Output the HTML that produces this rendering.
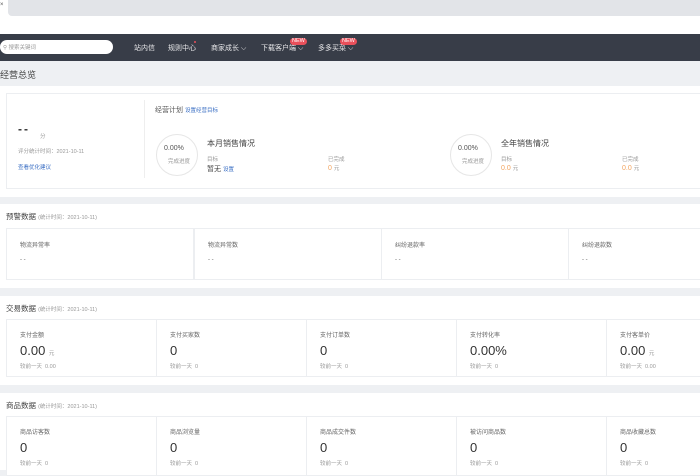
<!DOCTYPE html><html><head><meta charset="utf-8"><style>
*{margin:0;padding:0;box-sizing:border-box}
body{width:700px;height:470px;overflow:hidden;background:#eef0f3;font-family:"Liberation Sans","Noto Sans CJK SC",sans-serif;color:#333;position:relative}
.a{position:absolute;white-space:nowrap}
.w{background:#fff}
.box{position:absolute;border:1px solid #eceef1;background:#fff}
.lbl{font-size:6px;color:#666}
.sm{font-size:5.5px;color:#999}
.big{font-size:13px;color:#333}
.blue{color:#3b6fc4}
.org{color:#f2a35e}
.nav{font-size:7px;color:#e8e8ea}
.new{position:absolute;background:#e8505b;color:#fff;font-size:5.5px;border-radius:4px;padding:0 2px;line-height:7px}
</style></head><body>
<div class="a" style="left:0;top:0;width:700px;height:16px;background:#fff"></div>
<div class="a" style="left:8px;top:0;width:692px;height:16px;background:#e2e4e8;border-radius:0 0 0 4px"></div>
<div class="a" style="left:0;top:2px;font-size:6px;color:#555">×</div>
<div class="a" style="left:0;top:16px;width:700px;height:18px;background:#fff"></div>
<div class="a" style="left:0;top:34px;width:700px;height:27px;background:#383d48"></div>
<div class="a" style="left:0;top:40px;width:113px;height:14px;background:#fff;border-radius:7px"></div>
<div class="a sm" style="left:3px;top:43px">&#9906; 搜索关键词</div>
<div class="a nav" style="left:134px;top:43px">站内信</div>
<div class="a nav" style="left:168px;top:43px">规则中心</div>
<div class="a" style="left:194px;top:41px;width:2px;height:2px;background:#e8505b;border-radius:1px"></div>
<div class="a nav" style="left:211px;top:43px">商家成长 ⌵</div>
<div class="a nav" style="left:261px;top:43px">下载客户端 ⌵</div>
<div class="new" style="left:290px;top:38px">NEW</div>
<div class="a nav" style="left:318px;top:43px">多多买菜 ⌵</div>
<div class="new" style="left:340px;top:38px">NEW</div>
<div class="a" style="left:0;top:68px;font-size:9px;color:#444">经营总览</div>
<div class="a w" style="left:0;top:86px;width:700px;height:111px"></div>
<div class="box" style="left:6px;top:93px;width:700px;height:96px"></div>
<div class="a" style="left:144px;top:100px;width:1px;height:78px;background:#eee"></div>
<div class="a" style="left:18px;top:122px;font-size:12px;font-weight:bold;color:#333;letter-spacing:2px">--</div>
<div class="a sm" style="left:40px;top:132px">分</div>
<div class="a sm" style="left:18px;top:147px">评分统计时间：2021-10-11</div>
<div class="a sm blue" style="left:18px;top:163px">查看优化建议</div>
<div class="a" style="left:155px;top:105px;font-size:7px;color:#555">经营计划 <span class="blue" style="font-size:5.5px">设置经营目标</span></div>
<div class="a" style="left:156px;top:134px;width:42px;height:42px;border:1.5px solid #e6e6e6;border-radius:50%"></div>
<div class="a" style="left:164px;top:145px;font-size:7px;color:#555">0.00%</div>
<div class="a sm" style="left:168px;top:157px">完成进度</div>
<div class="a" style="left:207px;top:138px;font-size:8px;color:#444">本月销售情况</div>
<div class="a sm" style="left:207px;top:155px">目标</div>
<div class="a" style="left:207px;top:164px;font-size:7px;color:#444">暂无 <span class="blue" style="font-size:5.5px">设置</span></div>
<div class="a sm" style="left:328px;top:155px">已完成</div>
<div class="a" style="left:328px;top:164px;font-size:7px"><span class="org">0</span> <span class="sm">元</span></div>
<div class="a" style="left:450px;top:134px;width:42px;height:42px;border:1.5px solid #e6e6e6;border-radius:50%"></div>
<div class="a" style="left:458px;top:145px;font-size:7px;color:#555">0.00%</div>
<div class="a sm" style="left:462px;top:157px">完成进度</div>
<div class="a" style="left:501px;top:138px;font-size:8px;color:#444">全年销售情况</div>
<div class="a sm" style="left:501px;top:155px">目标</div>
<div class="a" style="left:501px;top:164px;font-size:7px"><span class="org">0.0</span> <span class="sm">元</span></div>
<div class="a sm" style="left:622px;top:155px">已完成</div>
<div class="a" style="left:622px;top:164px;font-size:7px"><span class="org">0.0</span> <span class="sm">元</span></div>

<div class="a w" style="left:0;top:204px;width:700px;height:84px"></div>
<div class="a" style="left:6px;top:211px;font-size:7.5px;color:#444">预警数据 <span class="sm">(统计时间：2021-10-11)</span></div>
<div class="box" style="left:6px;top:228px;width:188px;height:52px"></div>
<div class="box" style="left:194px;top:228px;width:188px;height:52px"></div>
<div class="box" style="left:381px;top:228px;width:188px;height:52px"></div>
<div class="box" style="left:568px;top:228px;width:188px;height:52px"></div>
<div class="a lbl" style="left:20px;top:240px">物流异常率</div><div class="a lbl" style="left:20px;top:257px">- -</div>
<div class="a lbl" style="left:208px;top:240px">物流异常数</div><div class="a lbl" style="left:208px;top:257px">- -</div>
<div class="a lbl" style="left:395px;top:240px">纠纷退款率</div><div class="a lbl" style="left:395px;top:257px">- -</div>
<div class="a lbl" style="left:582px;top:240px">纠纷退款数</div><div class="a lbl" style="left:582px;top:257px">- -</div>

<div class="a w" style="left:0;top:296px;width:700px;height:89px"></div>
<div class="a" style="left:6px;top:303px;font-size:7.5px;color:#444">交易数据 <span class="sm">(统计时间：2021-10-11)</span></div>
<div class="box" style="left:6px;top:319px;width:151px;height:58px"></div>
<div class="box" style="left:156px;top:319px;width:151px;height:58px"></div>
<div class="box" style="left:306px;top:319px;width:151px;height:58px"></div>
<div class="box" style="left:456px;top:319px;width:151px;height:58px"></div>
<div class="box" style="left:606px;top:319px;width:151px;height:58px"></div>
<div class="a lbl" style="left:20px;top:330px">支付金额</div><div class="a big" style="left:20px;top:343px">0.00 <span class="sm">元</span></div><div class="a sm" style="left:20px;top:362px">较前一天&nbsp;&nbsp;0.00</div>
<div class="a lbl" style="left:170px;top:330px">支付买家数</div><div class="a big" style="left:170px;top:343px">0</div><div class="a sm" style="left:170px;top:362px">较前一天&nbsp;&nbsp;0</div>
<div class="a lbl" style="left:320px;top:330px">支付订单数</div><div class="a big" style="left:320px;top:343px">0</div><div class="a sm" style="left:320px;top:362px">较前一天&nbsp;&nbsp;0</div>
<div class="a lbl" style="left:470px;top:330px">支付转化率</div><div class="a big" style="left:470px;top:343px">0.00%</div><div class="a sm" style="left:470px;top:362px">较前一天&nbsp;&nbsp;0</div>
<div class="a lbl" style="left:620px;top:330px">支付客单价</div><div class="a big" style="left:620px;top:343px">0.00 <span class="sm">元</span></div><div class="a sm" style="left:620px;top:362px">较前一天&nbsp;&nbsp;0.00</div>

<div class="a w" style="left:0;top:393px;width:700px;height:77px"></div>
<div class="a" style="left:6px;top:400px;font-size:7.5px;color:#444">商品数据 <span class="sm">(统计时间：2021-10-11)</span></div>
<div class="box" style="left:6px;top:416px;width:151px;height:60px"></div>
<div class="box" style="left:156px;top:416px;width:151px;height:60px"></div>
<div class="box" style="left:306px;top:416px;width:151px;height:60px"></div>
<div class="box" style="left:456px;top:416px;width:151px;height:60px"></div>
<div class="box" style="left:606px;top:416px;width:151px;height:60px"></div>
<div class="a lbl" style="left:20px;top:427px">商品访客数</div><div class="a big" style="left:20px;top:440px">0</div><div class="a sm" style="left:20px;top:459px">较前一天&nbsp;&nbsp;0</div>
<div class="a lbl" style="left:170px;top:427px">商品浏览量</div><div class="a big" style="left:170px;top:440px">0</div><div class="a sm" style="left:170px;top:459px">较前一天&nbsp;&nbsp;0</div>
<div class="a lbl" style="left:320px;top:427px">商品成交件数</div><div class="a big" style="left:320px;top:440px">0</div><div class="a sm" style="left:320px;top:459px">较前一天&nbsp;&nbsp;0</div>
<div class="a lbl" style="left:470px;top:427px">被访问商品数</div><div class="a big" style="left:470px;top:440px">0</div><div class="a sm" style="left:470px;top:459px">较前一天&nbsp;&nbsp;0</div>
<div class="a lbl" style="left:620px;top:427px">商品收藏总数</div><div class="a big" style="left:620px;top:440px">0</div><div class="a sm" style="left:620px;top:459px">较前一天&nbsp;&nbsp;0</div>
</body></html>
